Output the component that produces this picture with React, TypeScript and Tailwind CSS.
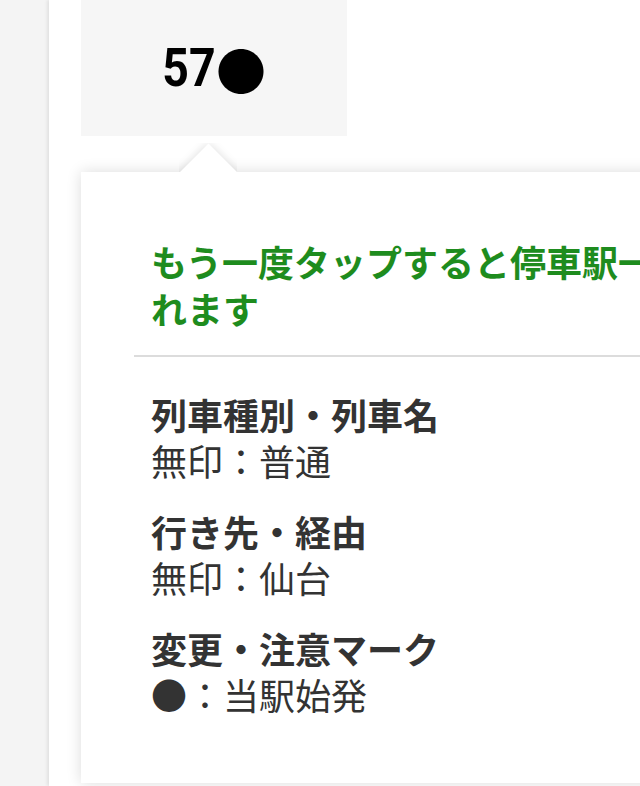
import React from "react";

const cjk = { fontFamily: '"Noto Sans CJK JP", "Noto Sans", sans-serif' };

function Item({ title, value }: { title: string; value: string }) {
  return (
    <div>
      <div className="text-[36px] leading-[46px] font-bold text-[#333333]">{title}</div>
      <div className="text-[36px] leading-[46px] font-normal text-[#333333]">{value}</div>
    </div>
  );
}

export default function App() {
  return (
    <div className="w-[640px] h-[786px] overflow-hidden flex bg-[#f4f4f4]" style={cjk}>
      <div className="w-[49px] shrink-0 bg-[#f4f4f4]" />
      <div className="flex-1 bg-white shadow-[-2px_0_3px_rgba(0,0,0,0.08)] flex flex-col">
        <div className="ml-[32px] w-[266px] h-[136px] shrink-0 bg-[#f6f6f6] flex items-center justify-center">
          <span
            className="inline-block origin-center scale-x-[0.86] -mx-[4px] text-[54px] leading-[60px] font-bold text-black"
            style={{ fontFamily: 'Roboto, "Liberation Sans", sans-serif' }}
          >
            57
          </span>
          <span className="text-[50px] leading-[60px] text-black">●</span>
        </div>
        <div className="relative ml-[32px] mt-[36px] w-[860px] h-[611px] shrink-0 bg-white shadow-[0_0_14px_rgba(0,0,0,0.14)] px-[53px]">
          <div className="absolute left-[98px] -top-[29px] w-[58px] h-[29px] overflow-hidden">
            <div className="absolute left-[8.5px] top-[8.5px] w-[41px] h-[41px] rotate-45 bg-white shadow-[0_0_10px_rgba(0,0,0,0.14)]" />
          </div>
          <div className="pt-[66px] pl-[17px] w-[710px] text-[36px] leading-[47px] font-bold text-[#1e8c1e]">
            もう一度タップすると停車駅一覧が表示されます
          </div>
          <div className="mt-[23px] h-[2px] bg-[#dcdcdc]" />
          <div className="pl-[17px] pt-[34px] flex flex-col gap-[25px]">
            <Item title="列車種別・列車名" value="無印：普通" />
            <Item title="行き先・経由" value="無印：仙台" />
            <Item title="変更・注意マーク" value="●：当駅始発" />
          </div>
        </div>
      </div>
    </div>
  );
}
